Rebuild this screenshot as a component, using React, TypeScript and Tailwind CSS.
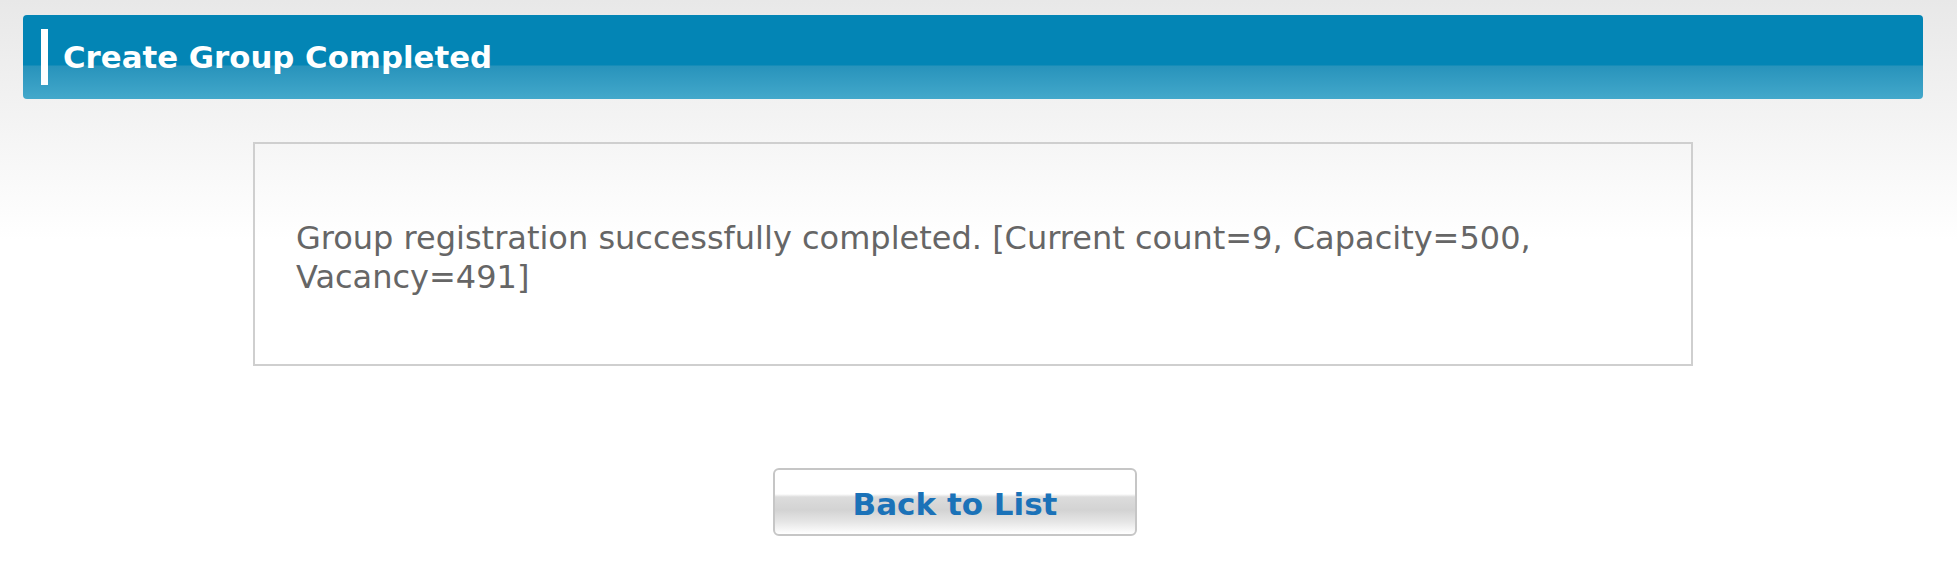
import React from "react";

export default function App() {
  return (
    <div
      className="min-h-[587px] w-full bg-[linear-gradient(to_bottom,#e8e8e8_0px,#ffffff_240px)] pt-[15px]"
      style={{ fontFamily: '"DejaVu Sans", Verdana, sans-serif' }}
    >
      <div className="ml-[23px] w-[1900px]">
        {/* Header bar */}
        <div className="flex h-[84px] items-center rounded-[4px] bg-[linear-gradient(to_bottom,#0385b5_0px,#0385b5_50px,#2893bb_51px,#43a8cb_84px)] pl-[18px]">
          <div className="h-[56px] w-[7px] bg-white" />
          <h1 className="ml-[15px] text-[30.8px] font-bold leading-none text-white">
            Create Group Completed
          </h1>
        </div>

        {/* Message box */}
        <div className="mx-auto mt-[43px] flex h-[224px] w-[1440px] items-center border-2 border-[#cfcfcf] px-[41px] pt-[8px]">
          <p className="text-[32px] leading-[39px] text-[#666666]">
            Group registration successfully completed. [Current count=9, Capacity=500, Vacancy=491]
          </p>
        </div>

        {/* Button */}
        <div className="mt-[102px] flex">
          <button
            type="button"
            className="ml-[750px] flex h-[68px] w-[364px] items-center justify-center rounded-[6px] border-2 border-[#c6c6c6] bg-[linear-gradient(to_bottom,#ffffff_0px,#ffffff_24px,#dcdcdc_27px,#d3d3d3_40px,#e6e6e6_52px,#ffffff_64px)] pt-[5px] text-[31px] font-bold leading-none text-[#1b72b8]"
          >
            Back to List
          </button>
        </div>
      </div>
    </div>
  );
}
